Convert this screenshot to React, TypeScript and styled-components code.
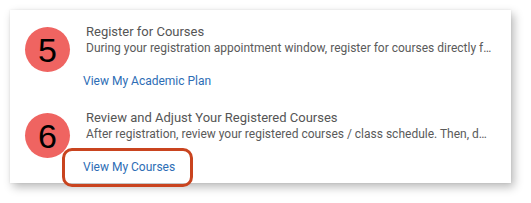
import styled, { createGlobalStyle } from 'styled-components';

const GlobalStyle = createGlobalStyle`
  html, body {
    margin: 0;
    padding: 0;
    background: #ffffff;
  }
  body {
    font-family: Roboto, "Liberation Sans", Arial, sans-serif;
  }
`;

const Page = styled.div`
  width: 531px;
  height: 203px;
  padding: 10px 0 0 10px;
  box-sizing: border-box;
`;

const Card = styled.section`
  width: 501px;
  height: 173px;
  box-sizing: border-box;
  background: #ffffff;
  box-shadow: 3px 4px 9px rgba(0, 0, 0, 0.28), 0 0 2px rgba(0, 0, 0, 0.08);
  padding: 13px 19px 0 15px;
  display: flex;
  flex-direction: column;
  gap: 19px;
`;

const Step = styled.div`
  display: flex;
  align-items: flex-start;
  gap: 16px;
`;

const Badge = styled.div`
  flex: none;
  width: 45px;
  height: 45px;
  margin-top: 4px;
  border-radius: 50%;
  background: #ef6461;
  color: #000000;
  display: flex;
  align-items: center;
  justify-content: center;
  font-family: "Liberation Sans", Arial, sans-serif;
  font-size: 34px;
  line-height: 1;
  padding-top: 1px;
  box-sizing: border-box;
`;

const Body = styled.div`
  flex: 1;
  min-width: 0;
  display: flex;
  flex-direction: column;
`;

const Title = styled.h3`
  margin: 0;
  font-size: 13px;
  font-weight: 400;
  line-height: 17px;
  color: #555555;
`;

const Desc = styled.p`
  margin: 0;
  font-size: 12px;
  line-height: 16px;
  color: #5a5a5a;
  white-space: nowrap;
`;

const LinkRow = styled.div`
  margin-top: 15px;
  line-height: 17px;
`;

const Link = styled.a<{ $highlight?: boolean }>`
  position: relative;
  display: inline-block;
  font-size: 12px;
  color: #2d6db5;
  text-decoration: none;
  margin-left: -3px;

  ${({ $highlight }) =>
    $highlight &&
    `
    &::after {
      content: '';
      position: absolute;
      left: -21px;
      right: -18px;
      top: -11px;
      bottom: -11px;
      border: 3px solid #c9441f;
      border-radius: 10px;
    }
  `}
`;

const steps = [
  {
    n: '5',
    title: 'Register for Courses',
    desc: 'During your registration appointment window, register for courses directly f…',
    link: 'View My Academic Plan',
    highlight: false,
  },
  {
    n: '6',
    title: 'Review and Adjust Your Registered Courses',
    desc: 'After registration, review your registered courses / class schedule. Then, d…',
    link: 'View My Courses',
    highlight: true,
  },
];

export default function App() {
  return (
    <>
      <GlobalStyle />
      <Page>
        <Card>
          {steps.map((s) => (
            <Step key={s.n}>
              <Badge>{s.n}</Badge>
              <Body>
                <Title>{s.title}</Title>
                <Desc>{s.desc}</Desc>
                <LinkRow>
                  <Link href="#" $highlight={s.highlight}>
                    {s.link}
                  </Link>
                </LinkRow>
              </Body>
            </Step>
          ))}
        </Card>
      </Page>
    </>
  );
}
